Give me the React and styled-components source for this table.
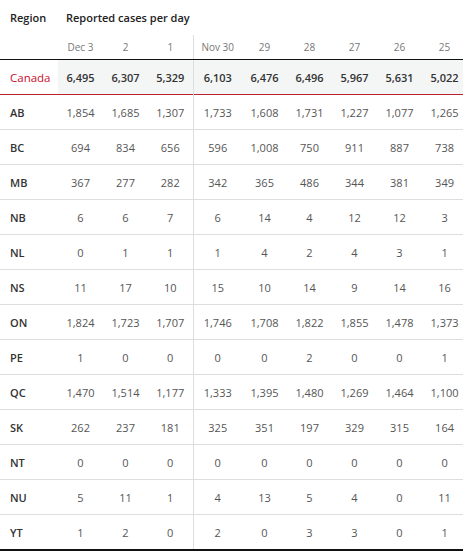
import React from "react";
import styled, { createGlobalStyle } from "styled-components";

const GlobalStyle = createGlobalStyle`
	html, body {
		margin: 0;
		padding: 0;
		background: #fff;
		overflow: hidden;
	}
	body {
		font-family: "Open Sans", "Noto Sans", sans-serif;
	}
`;

const Table = styled.table`
	border-collapse: collapse;
	table-layout: fixed;
	width: 467px;
	font-size: 11px;
	color: #555;
`;

const Col = styled.col`
	width: ${(p) => p.$w}px;
`;

const TitleCell = styled.th`
	height: 35px;
	padding: 0 0 0 ${(p) => p.$pad || 0}px;
	text-align: left;
	vertical-align: middle;
	font-weight: 600;
	font-size: 11px;
	color: #222;
	white-space: nowrap;
`;

const DateCell = styled.th`
	height: 24px;
	padding: 0;
	text-align: center;
	vertical-align: middle;
	font-weight: 400;
	font-size: 10px;
	color: #777;
	border-bottom: 1px solid #111;
	border-left: ${(p) => (p.$split ? "1px solid #ddd" : "none")};
`;

const Row = styled.tr`
	background: ${(p) => (p.$total ? "#f4f6f6" : "#fff")};
	border-bottom: ${(p) =>
		p.$total ? "1px solid #b8232f" : p.$last ? "2px solid #111" : "1px solid #ddd"};
`;

const Name = styled.td`
	height: 34px;
	padding: 0 0 0 10px;
	background: #fff;
	color: ${(p) => (p.$total ? "#c8102e" : "#333")};
	font-weight: ${(p) => (p.$total ? 400 : 600)};
	font-size: ${(p) => (p.$total ? "11.5px" : "11px")};
`;

const Num = styled.td`
	text-align: center;
	padding: 0;
	color: ${(p) => (p.$total ? "#333" : "#555")};
	font-weight: ${(p) => (p.$total ? 600 : 400)};
	font-size: 11px;
	border-left: ${(p) => (p.$split ? "1px solid #ddd" : "none")};
`;

const dates = ["Dec 3", "2", "1", "Nov 30", "29", "28", "27", "26", "25"];

const rows = [
	["Canada", "6,495", "6,307", "5,329", "6,103", "6,476", "6,496", "5,967", "5,631", "5,022"],
	["AB", "1,854", "1,685", "1,307", "1,733", "1,608", "1,731", "1,227", "1,077", "1,265"],
	["BC", "694", "834", "656", "596", "1,008", "750", "911", "887", "738"],
	["MB", "367", "277", "282", "342", "365", "486", "344", "381", "349"],
	["NB", "6", "6", "7", "6", "14", "4", "12", "12", "3"],
	["NL", "0", "1", "1", "1", "4", "2", "4", "3", "1"],
	["NS", "11", "17", "10", "15", "10", "14", "9", "14", "16"],
	["ON", "1,824", "1,723", "1,707", "1,746", "1,708", "1,822", "1,855", "1,478", "1,373"],
	["PE", "1", "0", "0", "0", "0", "2", "0", "0", "1"],
	["QC", "1,470", "1,514", "1,177", "1,333", "1,395", "1,480", "1,269", "1,464", "1,100"],
	["SK", "262", "237", "181", "325", "351", "197", "329", "315", "164"],
	["NT", "0", "0", "0", "0", "0", "0", "0", "0", "0"],
	["NU", "5", "11", "1", "4", "13", "5", "4", "0", "11"],
	["YT", "1", "2", "0", "2", "0", "3", "3", "0", "1"],
];

const widths = [58, 45, 45, 45, 49, 45, 45, 45, 45, 45];

export default function App() {
	return (
		<>
			<GlobalStyle />
			<Table>
				<colgroup>
					{widths.map((w, i) => (
						<Col key={i} $w={w} />
					))}
				</colgroup>
				<thead>
					<tr>
						<TitleCell $pad={10}>Region</TitleCell>
						<TitleCell $pad={8} colSpan={9}>Reported cases per day</TitleCell>
					</tr>
					<tr>
						<DateCell />
						{dates.map((d, i) => (
							<DateCell key={d} $split={i === 3}>
								{d}
							</DateCell>
						))}
					</tr>
				</thead>
				<tbody>
					{rows.map(([name, ...vals], r) => (
						<Row key={name} $total={r === 0} $last={r === rows.length - 1}>
							<Name $total={r === 0}>{name}</Name>
							{vals.map((v, i) => (
								<Num key={i} $total={r === 0} $split={i === 3}>
									{v}
								</Num>
							))}
						</Row>
					))}
				</tbody>
			</Table>
		</>
	);
}
